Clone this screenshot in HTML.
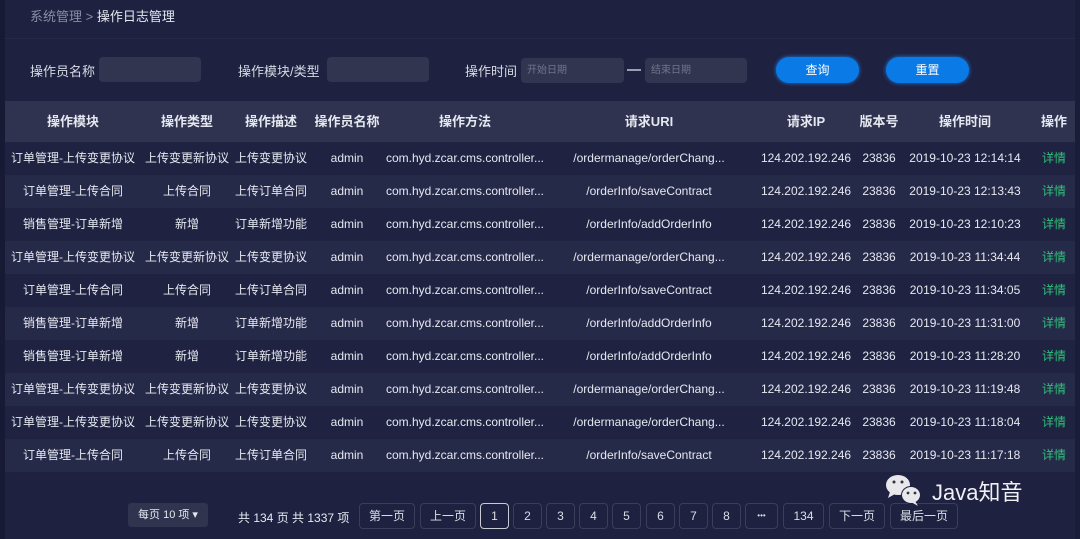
<!DOCTYPE html><html><head><meta charset="utf-8"><style>
*{margin:0;padding:0;box-sizing:border-box}
body{width:1080px;height:539px;background:#1e2140;font-family:"Liberation Sans","Noto Sans CJK SC",sans-serif;color:#e6e8f0;position:relative;overflow:hidden;font-size:12px}
.a{position:absolute;white-space:nowrap}
.strip{left:0;top:0;width:5px;height:539px;background:#161a34}
.rstrip{right:0;top:0;width:5px;height:539px;background:#1a1d38}
.line{left:5px;top:38px;width:1070px;height:1px;background:#262a48}
.lbl{font-size:13px;color:#d8dae4}
.inp{background:#31354f;border-radius:4px;height:25px}
.ph{font-size:10px;color:#70748c;line-height:26px;padding-left:6px}
.btn{background:#0a7ae6;border-radius:13px;height:26px;width:83px;text-align:center;line-height:26px;color:#fff;font-size:12px;box-shadow:0 0 4px #1a7ee6}
.row{left:5px;width:1070px;height:33px}
.c{position:absolute;text-align:center;line-height:33px;white-space:nowrap;transform:translateX(-50%);font-size:12px}
.h .c{font-weight:bold;line-height:41px;font-size:13px}
.pg{top:503px;height:26px;border:1px solid #3a3e5a;border-radius:4px;text-align:center;line-height:24px;font-size:12px;color:#dcdee6}
</style></head><body>
<div class="a strip"></div><div class="a rstrip"></div>
<div class="a" style="left:30px;top:6px;font-size:13px;color:#8a8ea4">系统管理 &gt; <span style="color:#e6e8f0">操作日志管理</span></div>
<div class="a line"></div>
<div class="a lbl" style="left:30px;top:61px">操作员名称</div>
<div class="a inp" style="left:99px;top:57px;width:102px"></div>
<div class="a lbl" style="left:238px;top:61px">操作模块/类型</div>
<div class="a inp" style="left:327px;top:57px;width:102px"></div>
<div class="a lbl" style="left:465px;top:61px">操作时间</div>
<div class="a inp ph" style="left:521px;top:58px;width:103px">开始日期</div>
<div class="a" style="left:627px;top:69px;width:14px;height:2px;background:#9a9eb0"></div>
<div class="a inp ph" style="left:645px;top:58px;width:102px">结束日期</div>
<div class="a btn" style="left:776px;top:57px">查询</div>
<div class="a btn" style="left:886px;top:57px">重置</div>
<div id="t"></div>
<div class="a" style="left:128px;top:503px;width:80px;height:24px;background:#30344f;border-radius:3px;text-align:center;line-height:24px;font-size:11px">每页 10 项 ▾</div>
<div class="a" style="left:238px;top:509px;font-size:12px">共 134 页 共 1337 项</div>
<div id="p"></div>
<div class="a" style="left:884px;top:472px;width:44px;height:34px">
<svg width="46" height="36" viewBox="0 0 46 36"><ellipse cx="14" cy="13" rx="12" ry="10" fill="#e8e8ec"/><path d="M6 20 L4 26 L11 22Z" fill="#e8e8ec"/><circle cx="10" cy="10" r="1.5" fill="#333"/><circle cx="18" cy="10" r="1.5" fill="#333"/><ellipse cx="27" cy="23" rx="10" ry="9" fill="#1e2140"/><ellipse cx="27" cy="23" rx="9" ry="8" fill="#e8e8ec"/><path d="M31 29 L34 34 L27 30Z" fill="#e8e8ec"/><circle cx="24" cy="21" r="1.4" fill="#333"/><circle cx="31" cy="21" r="1.4" fill="#333"/></svg></div>
<div class="a" style="left:932px;top:475px;font-size:22px;color:#f0f0f4">Java知音</div>
<script>
var xs=[68,182,266,342,460,644,801,874,960,1049];
var hd=["操作模块","操作类型","操作描述","操作员名称","操作方法","请求URI","请求IP","版本号","操作时间","操作"];
var A=["订单管理-上传变更协议","上传变更新协议","上传变更协议","/ordermanage/orderChang..."],B=["订单管理-上传合同","上传合同","上传订单合同","/orderInfo/saveContract"],C=["销售管理-订单新增","新增","订单新增功能","/orderInfo/addOrderInfo"];
var rows=[[A,"12:14:14"],[B,"12:13:43"],[C,"12:10:23"],[A,"11:34:44"],[B,"11:34:05"],[C,"11:31:00"],[C,"11:28:20"],[A,"11:19:48"],[A,"11:18:04"],[B,"11:17:18"]];
var h='<div class="a row h" style="top:101px;height:41px;background:#2f3350">';
hd.forEach(function(t,i){h+='<div class="c" style="left:'+xs[i]+'px">'+t+'</div>'});h+='</div>';
rows.forEach(function(r,k){var d=r[0];var v=[d[0],d[1],d[2],"admin","com.hyd.zcar.cms.controller...",d[3],"124.202.192.246","23836","2019-10-23 "+r[1],'<span style="color:#2fc07a">详情</span>'];
h+='<div class="a row" style="top:'+(142+k*33)+'px;background:'+(k%2?'#262a49':'#1f2341')+'">';
v.forEach(function(t,i){h+='<div class="c" style="left:'+xs[i]+'px">'+t+'</div>'});h+='</div>'});
document.getElementById('t').innerHTML=h;
var p=[[359,56,"第一页"],[420,56,"上一页"],[480,29,"1"],[513,29,"2"],[546,29,"3"],[579,29,"4"],[612,29,"5"],[646,29,"6"],[679,29,"7"],[712,29,"8"],[745,33,"•••"],[783,41,"134"],[829,56,"下一页"],[890,68,"最后一页"]];
var g='';p.forEach(function(q){g+='<div class="a pg" style="left:'+q[0]+'px;width:'+q[1]+'px;'+(q[2]=="1"?'border-color:#c8cad4':'')+(q[2]=="•••"?'font-size:8px':'')+'">'+q[2]+'</div>'});
document.getElementById('p').innerHTML=g;
</script>
</body></html>
